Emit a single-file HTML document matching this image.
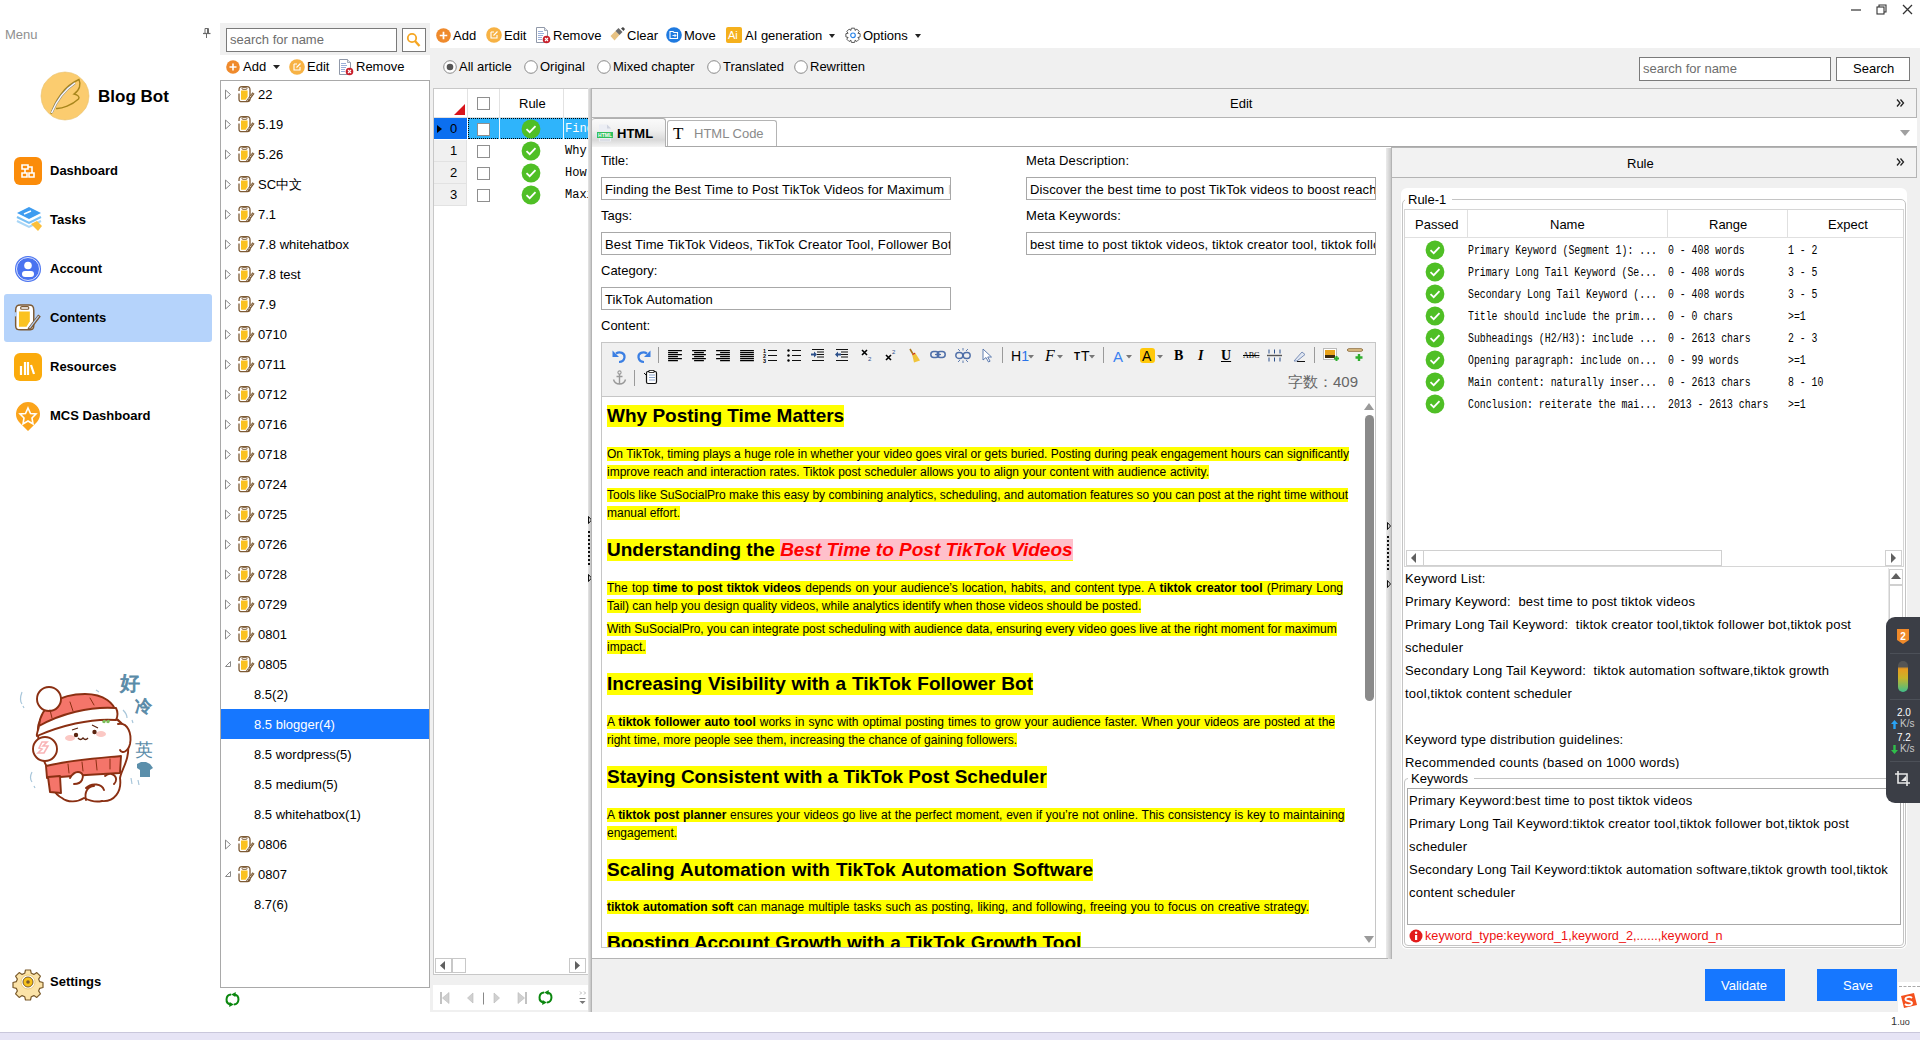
<!DOCTYPE html>
<html><head><meta charset="utf-8">
<style>
*{box-sizing:border-box;margin:0;padding:0}
html,body{width:1920px;height:1040px;overflow:hidden;background:#fff;font-family:"Liberation Sans",sans-serif;font-size:13px;color:#000}
.a{position:absolute}
.t{position:absolute;white-space:nowrap;line-height:1}
svg{position:absolute;overflow:visible}
.gray{background:#f0f0f0}
.inp{position:absolute;background:#fff;border:1px solid #a9a9a9}
.side{font-weight:bold;font-size:13px}
.tree .t{font-size:13px}
</style></head><body>
<!-- ============ SIDEBAR ============ -->
<div class="t" style="left:5px;top:28px;font-size:13px;color:#8f8f8f">Menu</div>
<svg style="left:202px;top:27px" width="10" height="12" viewBox="0 0 10 12"><path d="M3 1.5h3.5v5H3z" fill="none" stroke="#6a6a6a" stroke-width="1"/><path d="M5.5 2v4.5" stroke="#6a6a6a" stroke-width="1"/><path d="M1 6.5h7.5" stroke="#6a6a6a" stroke-width="1.2"/><path d="M4.5 7v4" stroke="#6a6a6a" stroke-width="1"/></svg>
<!-- logo -->
<svg style="left:40px;top:71px" width="50" height="50" viewBox="0 0 50 50">
<polygon points="25,1 31.5,1.9 37,4.2 41.8,8.2 45.8,13 48.1,18.5 49,25 48.1,31.5 45.8,37 41.8,41.8 37,45.8 31.5,48.1 25,49 18.5,48.1 13,45.8 8.2,41.8 4.2,37 1.9,31.5 1,25 1.9,18.5 4.2,13 8.2,8.2 13,4.2 18.5,1.9" fill="#fbcc6f" stroke="#e8bf6a" stroke-width="0.6"/>
<path d="M11 43 C15 30 24 15 39 8.5 C41 13 40 19 34 23 C38 24 40 26 38.5 28 C32 34 22 38 16 37.5" stroke="#a8861c" stroke-width="1.4" fill="none"/>
<path d="M11.5 42 C16 31 23 20 35 12" stroke="#8a8a8a" stroke-width="2.2" fill="none"/>
<path d="M11.5 42 C16 31 23 20 35 12" stroke="#fff" stroke-width="1.3" fill="none"/>
</svg>
<div class="t" style="left:98px;top:88px;font-size:17px;font-weight:bold">Blog Bot</div>

<div class="a" style="left:4px;top:294px;width:208px;height:48px;background:#b5d3fb;border-radius:3px"></div>
<!-- dashboard -->
<div class="a" style="left:14px;top:157px;width:28px;height:28px;background:#fb8c0a;border-radius:6px"></div>
<svg style="left:14px;top:157px" width="28" height="28" viewBox="0 0 28 28"><path d="M8 8h6v4h-6z M8 16h5v4h-5z M15 16h5v4h-5z M11 12v4 M14 10h4v6" stroke="#fff" stroke-width="1.6" fill="none"/></svg>
<div class="t side" style="left:50px;top:164px">Dashboard</div>
<!-- tasks -->
<svg style="left:15px;top:205px" width="30" height="30" viewBox="0 0 30 30">
<path d="M2 16l12 6 12-6" stroke="#a9d6f7" stroke-width="2" fill="none"/>
<path d="M2 12l12 6 12-6" stroke="#79c0f5" stroke-width="2" fill="none"/>
<polygon points="2,8 14,2 26,8 14,14" fill="#3e9cf0"/>
<path d="M9 9l7-3" stroke="#fff" stroke-width="1.5"/>
<polygon points="16,19 22,16 27,21 23,26" fill="#fbbf3a"/>
</svg>
<div class="t side" style="left:50px;top:213px">Tasks</div>
<!-- account -->
<svg style="left:14px;top:255px" width="28" height="28" viewBox="0 0 28 28"><circle cx="14" cy="14" r="13" fill="#4a73f0"/><circle cx="14" cy="14" r="11.5" fill="none" stroke="#fff" stroke-width="0.8"/><circle cx="14" cy="10.5" r="3.8" fill="#fff"/><rect x="8" y="16" width="12" height="6" rx="3" fill="#fff"/></svg>
<div class="t side" style="left:50px;top:262px">Account</div>
<!-- contents -->
<svg style="left:14px;top:304px" width="28" height="28" viewBox="0 0 17 17"><path d="M1 4 C1 1 2 0.6 4 0.6 H9 C11 0.6 12 1 12 4 V13 C12 15.4 11 15.6 9 15.6 H4 C2 15.6 1 15.4 1 13 Z" fill="#fff" stroke="#7d5a34" stroke-width="0.9"/><path d="M1 5v2.5" stroke="#b5d3fb" stroke-width="1.4"/><rect x="4" y="1.6" width="5" height="1.6" rx="0.8" fill="none" stroke="#7d5a34" stroke-width="0.7"/><path d="M3 4.5H9.6V10.5L7.6 13.8H3Z" fill="#fbc21f"/><path d="M9 15.5 L15.5 7" stroke="#7d5a34" stroke-width="2"/><path d="M9.4 14.6 L15 7.4" stroke="#b5d3fb" stroke-width="0.7"/></svg>
<div class="t side" style="left:50px;top:311px">Contents</div>
<!-- resources -->
<div class="a" style="left:14px;top:353px;width:28px;height:28px;background:#fbab0c;border-radius:6px"></div>
<svg style="left:14px;top:353px" width="28" height="28" viewBox="0 0 28 28"><path d="M7 13v9 M11 9v13 M14 9v13 M17 12l3 9" stroke="#fff" stroke-width="2.2" fill="none"/></svg>
<div class="t side" style="left:50px;top:360px">Resources</div>
<!-- mcs -->
<svg style="left:14px;top:402px" width="28" height="30" viewBox="0 0 28 30"><path d="M14 29 L5 20 A12 12 0 1 1 23 20 Z" fill="#fba41b"/><polygon points="14,6 16.5,11.5 22,12 18,16 19,22 14,19 9,22 10,16 6,12 11.5,11.5" fill="none" stroke="#fff" stroke-width="1.6"/></svg>
<div class="t side" style="left:50px;top:409px">MCS Dashboard</div>
<!-- settings -->
<svg style="left:14px;top:968px" width="28" height="28" viewBox="0 0 28 28"><path d="M11.5 2h5l0.8 3.3 2.6 1.1 2.9-1.8 3.6 3.6-1.8 2.9 1.1 2.6 3.3 0.8v5l-3.3 0.8-1.1 2.6 1.8 2.9-3.6 3.6-2.9-1.8-2.6 1.1-0.8 3.3h-5l-0.8-3.3-2.6-1.1-2.9 1.8-3.6-3.6 1.8-2.9-1.1-2.6-3.3-0.8v-5l3.3-0.8 1.1-2.6-1.8-2.9 3.6-3.6 2.9 1.8 2.6-1.1z" fill="#fbe3a8" stroke="#7a5a2a" stroke-width="1.2" stroke-linejoin="round"/><circle cx="14" cy="14" r="7" fill="#fff" stroke="#e8c060" stroke-width="0.8"/><circle cx="14" cy="14" r="5" fill="#f7c21c" stroke="#7a5a2a" stroke-width="1"/><circle cx="14" cy="14" r="1.8" fill="#7a5a2a"/></svg>
<div class="t side" style="left:50px;top:975px">Settings</div>

<!-- STICKER -->
<svg style="left:10px;top:660px" width="160" height="150" viewBox="0 0 160 150">
<g stroke="#8a2f12" stroke-width="1.9" stroke-linejoin="round" stroke-linecap="round">
<!-- body / face -->
<path d="M28 72 C26 52 50 48 75 52 C100 52 118 60 118 82 C120 100 112 108 110 118 C112 132 104 142 92 141 C84 143 78 140 74 138 C68 142 58 143 52 138 C44 134 40 124 40 112 C32 100 28 88 28 72Z" fill="#fff"/>
<!-- right earmuff -->
<path d="M108 64 C118 62 122 74 120 84 C118 92 112 94 110 90" fill="#fff"/>
<!-- hat -->
<path d="M29 66 C30 46 50 34 75 34 C95 34 104 44 106 52 C90 50 60 52 29 66Z" fill="#f4756a"/>
<circle cx="39" cy="39" r="12" fill="#fff"/>
<path d="M29 66 C28 72 26 74 27 76 C50 66 80 58 106 60 C108 56 108 52 106 48 C80 46 50 54 29 66Z" fill="#fff"/>
<path d="M40 50l2 8M60 42l3 9M80 38l4 7" stroke-width="1"/>
<!-- left earmuff -->
<circle cx="35" cy="89" r="12" fill="#fff"/>
<!-- scarf -->
<path d="M36 106 C60 100 90 98 111 96 L110 113 C90 114 60 116 37 118Z" fill="#f4756a"/>
<path d="M38 117 L50 116 L51 133 L40 132Z" fill="#f4756a"/>
<path d="M58 104l1 9M72 102l1 9M86 100l1 10M100 99l0 10" stroke-width="1"/>
<!-- hands -->
<path d="M60 118 C66 108 76 112 72 120 C70 124 66 124 64 124" fill="#fff"/>
<path d="M95 116 C102 110 110 118 104 124" fill="#fff"/>
<path d="M76 128 C82 122 92 124 94 130 M76 140 C74 132 78 126 84 126" fill="none"/>
</g>
<path d="M29 88 l3 -6 l5 0 l-4 4 l5 0 l-4 7 l-6 0 l4 -4z" fill="none" stroke="#f9b4b6" stroke-width="1.6"/>
<ellipse cx="60" cy="78" rx="5" ry="3" fill="#fbc8c4"/>
<ellipse cx="91" cy="74" rx="5" ry="3" fill="#fbc8c4"/>
<circle cx="66" cy="75" r="2.2" fill="#5a2410"/><circle cx="84.5" cy="72" r="2.2" fill="#5a2410"/>
<path d="M68 78 q2.5 3 5 0 q2.5 3 5 0" fill="none" stroke="#5a2410" stroke-width="1.3"/>
<path d="M62 70l6 -2M82 65l6 3" stroke="#5a2410" stroke-width="1.2"/>
<path d="M92 62 q2 -4 4 -1 q-1 4 -4 1z M96 62 q2 -4 4 -1 q-1 4 -4 1z" fill="#7bbf5a"/>
<g fill="#5a8ba8" stroke="#5a8ba8" stroke-width="0.9" font-family="Liberation Sans" font-size="19">
<text x="110" y="30" font-size="20">好</text>
<text x="125" y="52" font-size="17">冷</text>
<text x="125" y="96" font-size="18" stroke-width="0">英</text>
</g>
<path d="M127 104 l4 -2 h5 l4 2 l3 4 -3 2 v7 h-10 v-7 l-3 -2z" fill="#5b8fab"/>
<path d="M12 32 q-3 8 0 12 M13 46 l1 2 M113 50 q4 4 4 8 M122 60l1 3 M22 112 q-3 6 0 10 M24 126 l1 2 M128 120 l1 5 M121 118 l1 6 M86 30l3 2" stroke="#a8c6da" stroke-width="1.2" fill="none"/>
</svg>


<!-- ============ TREE PANEL ============ -->
<div class="a gray" style="left:220px;top:23px;width:210px;height:32px"></div>
<div class="inp" style="left:226px;top:28px;width:171px;height:24px;border-color:#7a7a7a"></div>
<div class="t" style="left:230px;top:33px;font-size:13px;color:#6d6d6d">search for name</div>
<div class="inp" style="left:402px;top:28px;width:24px;height:24px;border-color:#7a7a7a"></div>
<svg style="left:406px;top:32px" width="16" height="16" viewBox="0 0 16 16"><circle cx="6" cy="6" r="4.2" fill="none" stroke="#f5a623" stroke-width="1.8"/><path d="M9 9l4.5 5" stroke="#f5a623" stroke-width="2.4"/></svg>

<svg style="left:226px;top:60px" width="14" height="14" viewBox="0 0 14 14"><circle cx="7" cy="7" r="6.8" fill="#ef8a2c"/><path d="M7 3.5v7M3.5 7h7" stroke="#fff" stroke-width="1.6"/></svg>
<div class="t" style="left:243px;top:60px">Add</div>
<svg style="left:273px;top:65px" width="8" height="4" viewBox="0 0 8 4"><path d="M0 0h7l-3.5 4z" fill="#222"/></svg>
<svg style="left:289px;top:59px" width="16" height="16" viewBox="0 0 16 16"><circle cx="8" cy="8" r="7.8" fill="#f7b244"/><path d="M5 5h3M5 5v6h6V8M7.5 8.5l4-4" stroke="#fff" stroke-width="1.1" fill="none"/></svg>
<div class="t" style="left:307px;top:60px">Edit</div>
<svg style="left:338px;top:59px" width="16" height="17" viewBox="0 0 16 17"><path d="M1.5 0.5h8l3 3v12h-11z" fill="#fff" stroke="#9098a8" stroke-width="1"/><path d="M9.5 0.5v3h3" fill="#e0e4ec" stroke="#9098a8" stroke-width="0.8"/><path d="M3 4.5h5M3 6.5h6M3 8.5h5M3 10.5h4M3 12.5h4" stroke="#6f8cc8" stroke-width="0.7"/><circle cx="11.5" cy="12.5" r="3.8" fill="#c8202c"/><path d="M10 11l3 3M13 11l-3 3" stroke="#fff" stroke-width="1.1"/></svg>
<div class="t" style="left:356px;top:60px">Remove</div>

<div class="a" style="left:220px;top:80px;width:210px;height:908px;border:1px solid #a9a9a9;background:#fff"></div>
<div class="a" style="left:221px;top:709px;width:208px;height:30px;background:#1677ff"></div>
<div class="tree"><svg style="left:224px;top:89px" width="8" height="11" viewBox="0 0 8 11"><path d="M1.5 1v9l5-4.5z" fill="none" stroke="#8a8a8a" stroke-width="1"/></svg>
<svg style="left:238px;top:86px" width="17" height="17" viewBox="0 0 17 17"><path d="M1 4 C1 1 2 0.6 4 0.6 H9 C11 0.6 12 1 12 4 V13 C12 15.4 11 15.6 9 15.6 H4 C2 15.6 1 15.4 1 13 Z" fill="#fff" stroke="#7d5a34" stroke-width="1.3"/><path d="M1 5v2.5" stroke="#fff" stroke-width="2"/><rect x="4" y="1.6" width="5" height="1.8" rx="0.9" fill="none" stroke="#7d5a34" stroke-width="0.9"/><path d="M3 4.5H9.6V10.5L7.6 13.8H3Z" fill="#fbc21f"/><path d="M9 15.5 L15.5 7" stroke="#7d5a34" stroke-width="2.6"/><path d="M9.4 14.6 L15 7.4" stroke="#fff" stroke-width="0.9" stroke-dasharray="1.2 1"/></svg>
<div class="t" style="left:258px;top:88px">22</div>
<svg style="left:224px;top:119px" width="8" height="11" viewBox="0 0 8 11"><path d="M1.5 1v9l5-4.5z" fill="none" stroke="#8a8a8a" stroke-width="1"/></svg>
<svg style="left:238px;top:116px" width="17" height="17" viewBox="0 0 17 17"><path d="M1 4 C1 1 2 0.6 4 0.6 H9 C11 0.6 12 1 12 4 V13 C12 15.4 11 15.6 9 15.6 H4 C2 15.6 1 15.4 1 13 Z" fill="#fff" stroke="#7d5a34" stroke-width="1.3"/><path d="M1 5v2.5" stroke="#fff" stroke-width="2"/><rect x="4" y="1.6" width="5" height="1.8" rx="0.9" fill="none" stroke="#7d5a34" stroke-width="0.9"/><path d="M3 4.5H9.6V10.5L7.6 13.8H3Z" fill="#fbc21f"/><path d="M9 15.5 L15.5 7" stroke="#7d5a34" stroke-width="2.6"/><path d="M9.4 14.6 L15 7.4" stroke="#fff" stroke-width="0.9" stroke-dasharray="1.2 1"/></svg>
<div class="t" style="left:258px;top:118px">5.19</div>
<svg style="left:224px;top:149px" width="8" height="11" viewBox="0 0 8 11"><path d="M1.5 1v9l5-4.5z" fill="none" stroke="#8a8a8a" stroke-width="1"/></svg>
<svg style="left:238px;top:146px" width="17" height="17" viewBox="0 0 17 17"><path d="M1 4 C1 1 2 0.6 4 0.6 H9 C11 0.6 12 1 12 4 V13 C12 15.4 11 15.6 9 15.6 H4 C2 15.6 1 15.4 1 13 Z" fill="#fff" stroke="#7d5a34" stroke-width="1.3"/><path d="M1 5v2.5" stroke="#fff" stroke-width="2"/><rect x="4" y="1.6" width="5" height="1.8" rx="0.9" fill="none" stroke="#7d5a34" stroke-width="0.9"/><path d="M3 4.5H9.6V10.5L7.6 13.8H3Z" fill="#fbc21f"/><path d="M9 15.5 L15.5 7" stroke="#7d5a34" stroke-width="2.6"/><path d="M9.4 14.6 L15 7.4" stroke="#fff" stroke-width="0.9" stroke-dasharray="1.2 1"/></svg>
<div class="t" style="left:258px;top:148px">5.26</div>
<svg style="left:224px;top:179px" width="8" height="11" viewBox="0 0 8 11"><path d="M1.5 1v9l5-4.5z" fill="none" stroke="#8a8a8a" stroke-width="1"/></svg>
<svg style="left:238px;top:176px" width="17" height="17" viewBox="0 0 17 17"><path d="M1 4 C1 1 2 0.6 4 0.6 H9 C11 0.6 12 1 12 4 V13 C12 15.4 11 15.6 9 15.6 H4 C2 15.6 1 15.4 1 13 Z" fill="#fff" stroke="#7d5a34" stroke-width="1.3"/><path d="M1 5v2.5" stroke="#fff" stroke-width="2"/><rect x="4" y="1.6" width="5" height="1.8" rx="0.9" fill="none" stroke="#7d5a34" stroke-width="0.9"/><path d="M3 4.5H9.6V10.5L7.6 13.8H3Z" fill="#fbc21f"/><path d="M9 15.5 L15.5 7" stroke="#7d5a34" stroke-width="2.6"/><path d="M9.4 14.6 L15 7.4" stroke="#fff" stroke-width="0.9" stroke-dasharray="1.2 1"/></svg>
<div class="t" style="left:258px;top:178px">SC中文</div>
<svg style="left:224px;top:209px" width="8" height="11" viewBox="0 0 8 11"><path d="M1.5 1v9l5-4.5z" fill="none" stroke="#8a8a8a" stroke-width="1"/></svg>
<svg style="left:238px;top:206px" width="17" height="17" viewBox="0 0 17 17"><path d="M1 4 C1 1 2 0.6 4 0.6 H9 C11 0.6 12 1 12 4 V13 C12 15.4 11 15.6 9 15.6 H4 C2 15.6 1 15.4 1 13 Z" fill="#fff" stroke="#7d5a34" stroke-width="1.3"/><path d="M1 5v2.5" stroke="#fff" stroke-width="2"/><rect x="4" y="1.6" width="5" height="1.8" rx="0.9" fill="none" stroke="#7d5a34" stroke-width="0.9"/><path d="M3 4.5H9.6V10.5L7.6 13.8H3Z" fill="#fbc21f"/><path d="M9 15.5 L15.5 7" stroke="#7d5a34" stroke-width="2.6"/><path d="M9.4 14.6 L15 7.4" stroke="#fff" stroke-width="0.9" stroke-dasharray="1.2 1"/></svg>
<div class="t" style="left:258px;top:208px">7.1</div>
<svg style="left:224px;top:239px" width="8" height="11" viewBox="0 0 8 11"><path d="M1.5 1v9l5-4.5z" fill="none" stroke="#8a8a8a" stroke-width="1"/></svg>
<svg style="left:238px;top:236px" width="17" height="17" viewBox="0 0 17 17"><path d="M1 4 C1 1 2 0.6 4 0.6 H9 C11 0.6 12 1 12 4 V13 C12 15.4 11 15.6 9 15.6 H4 C2 15.6 1 15.4 1 13 Z" fill="#fff" stroke="#7d5a34" stroke-width="1.3"/><path d="M1 5v2.5" stroke="#fff" stroke-width="2"/><rect x="4" y="1.6" width="5" height="1.8" rx="0.9" fill="none" stroke="#7d5a34" stroke-width="0.9"/><path d="M3 4.5H9.6V10.5L7.6 13.8H3Z" fill="#fbc21f"/><path d="M9 15.5 L15.5 7" stroke="#7d5a34" stroke-width="2.6"/><path d="M9.4 14.6 L15 7.4" stroke="#fff" stroke-width="0.9" stroke-dasharray="1.2 1"/></svg>
<div class="t" style="left:258px;top:238px">7.8 whitehatbox</div>
<svg style="left:224px;top:269px" width="8" height="11" viewBox="0 0 8 11"><path d="M1.5 1v9l5-4.5z" fill="none" stroke="#8a8a8a" stroke-width="1"/></svg>
<svg style="left:238px;top:266px" width="17" height="17" viewBox="0 0 17 17"><path d="M1 4 C1 1 2 0.6 4 0.6 H9 C11 0.6 12 1 12 4 V13 C12 15.4 11 15.6 9 15.6 H4 C2 15.6 1 15.4 1 13 Z" fill="#fff" stroke="#7d5a34" stroke-width="1.3"/><path d="M1 5v2.5" stroke="#fff" stroke-width="2"/><rect x="4" y="1.6" width="5" height="1.8" rx="0.9" fill="none" stroke="#7d5a34" stroke-width="0.9"/><path d="M3 4.5H9.6V10.5L7.6 13.8H3Z" fill="#fbc21f"/><path d="M9 15.5 L15.5 7" stroke="#7d5a34" stroke-width="2.6"/><path d="M9.4 14.6 L15 7.4" stroke="#fff" stroke-width="0.9" stroke-dasharray="1.2 1"/></svg>
<div class="t" style="left:258px;top:268px">7.8 test</div>
<svg style="left:224px;top:299px" width="8" height="11" viewBox="0 0 8 11"><path d="M1.5 1v9l5-4.5z" fill="none" stroke="#8a8a8a" stroke-width="1"/></svg>
<svg style="left:238px;top:296px" width="17" height="17" viewBox="0 0 17 17"><path d="M1 4 C1 1 2 0.6 4 0.6 H9 C11 0.6 12 1 12 4 V13 C12 15.4 11 15.6 9 15.6 H4 C2 15.6 1 15.4 1 13 Z" fill="#fff" stroke="#7d5a34" stroke-width="1.3"/><path d="M1 5v2.5" stroke="#fff" stroke-width="2"/><rect x="4" y="1.6" width="5" height="1.8" rx="0.9" fill="none" stroke="#7d5a34" stroke-width="0.9"/><path d="M3 4.5H9.6V10.5L7.6 13.8H3Z" fill="#fbc21f"/><path d="M9 15.5 L15.5 7" stroke="#7d5a34" stroke-width="2.6"/><path d="M9.4 14.6 L15 7.4" stroke="#fff" stroke-width="0.9" stroke-dasharray="1.2 1"/></svg>
<div class="t" style="left:258px;top:298px">7.9</div>
<svg style="left:224px;top:329px" width="8" height="11" viewBox="0 0 8 11"><path d="M1.5 1v9l5-4.5z" fill="none" stroke="#8a8a8a" stroke-width="1"/></svg>
<svg style="left:238px;top:326px" width="17" height="17" viewBox="0 0 17 17"><path d="M1 4 C1 1 2 0.6 4 0.6 H9 C11 0.6 12 1 12 4 V13 C12 15.4 11 15.6 9 15.6 H4 C2 15.6 1 15.4 1 13 Z" fill="#fff" stroke="#7d5a34" stroke-width="1.3"/><path d="M1 5v2.5" stroke="#fff" stroke-width="2"/><rect x="4" y="1.6" width="5" height="1.8" rx="0.9" fill="none" stroke="#7d5a34" stroke-width="0.9"/><path d="M3 4.5H9.6V10.5L7.6 13.8H3Z" fill="#fbc21f"/><path d="M9 15.5 L15.5 7" stroke="#7d5a34" stroke-width="2.6"/><path d="M9.4 14.6 L15 7.4" stroke="#fff" stroke-width="0.9" stroke-dasharray="1.2 1"/></svg>
<div class="t" style="left:258px;top:328px">0710</div>
<svg style="left:224px;top:359px" width="8" height="11" viewBox="0 0 8 11"><path d="M1.5 1v9l5-4.5z" fill="none" stroke="#8a8a8a" stroke-width="1"/></svg>
<svg style="left:238px;top:356px" width="17" height="17" viewBox="0 0 17 17"><path d="M1 4 C1 1 2 0.6 4 0.6 H9 C11 0.6 12 1 12 4 V13 C12 15.4 11 15.6 9 15.6 H4 C2 15.6 1 15.4 1 13 Z" fill="#fff" stroke="#7d5a34" stroke-width="1.3"/><path d="M1 5v2.5" stroke="#fff" stroke-width="2"/><rect x="4" y="1.6" width="5" height="1.8" rx="0.9" fill="none" stroke="#7d5a34" stroke-width="0.9"/><path d="M3 4.5H9.6V10.5L7.6 13.8H3Z" fill="#fbc21f"/><path d="M9 15.5 L15.5 7" stroke="#7d5a34" stroke-width="2.6"/><path d="M9.4 14.6 L15 7.4" stroke="#fff" stroke-width="0.9" stroke-dasharray="1.2 1"/></svg>
<div class="t" style="left:258px;top:358px">0711</div>
<svg style="left:224px;top:389px" width="8" height="11" viewBox="0 0 8 11"><path d="M1.5 1v9l5-4.5z" fill="none" stroke="#8a8a8a" stroke-width="1"/></svg>
<svg style="left:238px;top:386px" width="17" height="17" viewBox="0 0 17 17"><path d="M1 4 C1 1 2 0.6 4 0.6 H9 C11 0.6 12 1 12 4 V13 C12 15.4 11 15.6 9 15.6 H4 C2 15.6 1 15.4 1 13 Z" fill="#fff" stroke="#7d5a34" stroke-width="1.3"/><path d="M1 5v2.5" stroke="#fff" stroke-width="2"/><rect x="4" y="1.6" width="5" height="1.8" rx="0.9" fill="none" stroke="#7d5a34" stroke-width="0.9"/><path d="M3 4.5H9.6V10.5L7.6 13.8H3Z" fill="#fbc21f"/><path d="M9 15.5 L15.5 7" stroke="#7d5a34" stroke-width="2.6"/><path d="M9.4 14.6 L15 7.4" stroke="#fff" stroke-width="0.9" stroke-dasharray="1.2 1"/></svg>
<div class="t" style="left:258px;top:388px">0712</div>
<svg style="left:224px;top:419px" width="8" height="11" viewBox="0 0 8 11"><path d="M1.5 1v9l5-4.5z" fill="none" stroke="#8a8a8a" stroke-width="1"/></svg>
<svg style="left:238px;top:416px" width="17" height="17" viewBox="0 0 17 17"><path d="M1 4 C1 1 2 0.6 4 0.6 H9 C11 0.6 12 1 12 4 V13 C12 15.4 11 15.6 9 15.6 H4 C2 15.6 1 15.4 1 13 Z" fill="#fff" stroke="#7d5a34" stroke-width="1.3"/><path d="M1 5v2.5" stroke="#fff" stroke-width="2"/><rect x="4" y="1.6" width="5" height="1.8" rx="0.9" fill="none" stroke="#7d5a34" stroke-width="0.9"/><path d="M3 4.5H9.6V10.5L7.6 13.8H3Z" fill="#fbc21f"/><path d="M9 15.5 L15.5 7" stroke="#7d5a34" stroke-width="2.6"/><path d="M9.4 14.6 L15 7.4" stroke="#fff" stroke-width="0.9" stroke-dasharray="1.2 1"/></svg>
<div class="t" style="left:258px;top:418px">0716</div>
<svg style="left:224px;top:449px" width="8" height="11" viewBox="0 0 8 11"><path d="M1.5 1v9l5-4.5z" fill="none" stroke="#8a8a8a" stroke-width="1"/></svg>
<svg style="left:238px;top:446px" width="17" height="17" viewBox="0 0 17 17"><path d="M1 4 C1 1 2 0.6 4 0.6 H9 C11 0.6 12 1 12 4 V13 C12 15.4 11 15.6 9 15.6 H4 C2 15.6 1 15.4 1 13 Z" fill="#fff" stroke="#7d5a34" stroke-width="1.3"/><path d="M1 5v2.5" stroke="#fff" stroke-width="2"/><rect x="4" y="1.6" width="5" height="1.8" rx="0.9" fill="none" stroke="#7d5a34" stroke-width="0.9"/><path d="M3 4.5H9.6V10.5L7.6 13.8H3Z" fill="#fbc21f"/><path d="M9 15.5 L15.5 7" stroke="#7d5a34" stroke-width="2.6"/><path d="M9.4 14.6 L15 7.4" stroke="#fff" stroke-width="0.9" stroke-dasharray="1.2 1"/></svg>
<div class="t" style="left:258px;top:448px">0718</div>
<svg style="left:224px;top:479px" width="8" height="11" viewBox="0 0 8 11"><path d="M1.5 1v9l5-4.5z" fill="none" stroke="#8a8a8a" stroke-width="1"/></svg>
<svg style="left:238px;top:476px" width="17" height="17" viewBox="0 0 17 17"><path d="M1 4 C1 1 2 0.6 4 0.6 H9 C11 0.6 12 1 12 4 V13 C12 15.4 11 15.6 9 15.6 H4 C2 15.6 1 15.4 1 13 Z" fill="#fff" stroke="#7d5a34" stroke-width="1.3"/><path d="M1 5v2.5" stroke="#fff" stroke-width="2"/><rect x="4" y="1.6" width="5" height="1.8" rx="0.9" fill="none" stroke="#7d5a34" stroke-width="0.9"/><path d="M3 4.5H9.6V10.5L7.6 13.8H3Z" fill="#fbc21f"/><path d="M9 15.5 L15.5 7" stroke="#7d5a34" stroke-width="2.6"/><path d="M9.4 14.6 L15 7.4" stroke="#fff" stroke-width="0.9" stroke-dasharray="1.2 1"/></svg>
<div class="t" style="left:258px;top:478px">0724</div>
<svg style="left:224px;top:509px" width="8" height="11" viewBox="0 0 8 11"><path d="M1.5 1v9l5-4.5z" fill="none" stroke="#8a8a8a" stroke-width="1"/></svg>
<svg style="left:238px;top:506px" width="17" height="17" viewBox="0 0 17 17"><path d="M1 4 C1 1 2 0.6 4 0.6 H9 C11 0.6 12 1 12 4 V13 C12 15.4 11 15.6 9 15.6 H4 C2 15.6 1 15.4 1 13 Z" fill="#fff" stroke="#7d5a34" stroke-width="1.3"/><path d="M1 5v2.5" stroke="#fff" stroke-width="2"/><rect x="4" y="1.6" width="5" height="1.8" rx="0.9" fill="none" stroke="#7d5a34" stroke-width="0.9"/><path d="M3 4.5H9.6V10.5L7.6 13.8H3Z" fill="#fbc21f"/><path d="M9 15.5 L15.5 7" stroke="#7d5a34" stroke-width="2.6"/><path d="M9.4 14.6 L15 7.4" stroke="#fff" stroke-width="0.9" stroke-dasharray="1.2 1"/></svg>
<div class="t" style="left:258px;top:508px">0725</div>
<svg style="left:224px;top:539px" width="8" height="11" viewBox="0 0 8 11"><path d="M1.5 1v9l5-4.5z" fill="none" stroke="#8a8a8a" stroke-width="1"/></svg>
<svg style="left:238px;top:536px" width="17" height="17" viewBox="0 0 17 17"><path d="M1 4 C1 1 2 0.6 4 0.6 H9 C11 0.6 12 1 12 4 V13 C12 15.4 11 15.6 9 15.6 H4 C2 15.6 1 15.4 1 13 Z" fill="#fff" stroke="#7d5a34" stroke-width="1.3"/><path d="M1 5v2.5" stroke="#fff" stroke-width="2"/><rect x="4" y="1.6" width="5" height="1.8" rx="0.9" fill="none" stroke="#7d5a34" stroke-width="0.9"/><path d="M3 4.5H9.6V10.5L7.6 13.8H3Z" fill="#fbc21f"/><path d="M9 15.5 L15.5 7" stroke="#7d5a34" stroke-width="2.6"/><path d="M9.4 14.6 L15 7.4" stroke="#fff" stroke-width="0.9" stroke-dasharray="1.2 1"/></svg>
<div class="t" style="left:258px;top:538px">0726</div>
<svg style="left:224px;top:569px" width="8" height="11" viewBox="0 0 8 11"><path d="M1.5 1v9l5-4.5z" fill="none" stroke="#8a8a8a" stroke-width="1"/></svg>
<svg style="left:238px;top:566px" width="17" height="17" viewBox="0 0 17 17"><path d="M1 4 C1 1 2 0.6 4 0.6 H9 C11 0.6 12 1 12 4 V13 C12 15.4 11 15.6 9 15.6 H4 C2 15.6 1 15.4 1 13 Z" fill="#fff" stroke="#7d5a34" stroke-width="1.3"/><path d="M1 5v2.5" stroke="#fff" stroke-width="2"/><rect x="4" y="1.6" width="5" height="1.8" rx="0.9" fill="none" stroke="#7d5a34" stroke-width="0.9"/><path d="M3 4.5H9.6V10.5L7.6 13.8H3Z" fill="#fbc21f"/><path d="M9 15.5 L15.5 7" stroke="#7d5a34" stroke-width="2.6"/><path d="M9.4 14.6 L15 7.4" stroke="#fff" stroke-width="0.9" stroke-dasharray="1.2 1"/></svg>
<div class="t" style="left:258px;top:568px">0728</div>
<svg style="left:224px;top:599px" width="8" height="11" viewBox="0 0 8 11"><path d="M1.5 1v9l5-4.5z" fill="none" stroke="#8a8a8a" stroke-width="1"/></svg>
<svg style="left:238px;top:596px" width="17" height="17" viewBox="0 0 17 17"><path d="M1 4 C1 1 2 0.6 4 0.6 H9 C11 0.6 12 1 12 4 V13 C12 15.4 11 15.6 9 15.6 H4 C2 15.6 1 15.4 1 13 Z" fill="#fff" stroke="#7d5a34" stroke-width="1.3"/><path d="M1 5v2.5" stroke="#fff" stroke-width="2"/><rect x="4" y="1.6" width="5" height="1.8" rx="0.9" fill="none" stroke="#7d5a34" stroke-width="0.9"/><path d="M3 4.5H9.6V10.5L7.6 13.8H3Z" fill="#fbc21f"/><path d="M9 15.5 L15.5 7" stroke="#7d5a34" stroke-width="2.6"/><path d="M9.4 14.6 L15 7.4" stroke="#fff" stroke-width="0.9" stroke-dasharray="1.2 1"/></svg>
<div class="t" style="left:258px;top:598px">0729</div>
<svg style="left:224px;top:629px" width="8" height="11" viewBox="0 0 8 11"><path d="M1.5 1v9l5-4.5z" fill="none" stroke="#8a8a8a" stroke-width="1"/></svg>
<svg style="left:238px;top:626px" width="17" height="17" viewBox="0 0 17 17"><path d="M1 4 C1 1 2 0.6 4 0.6 H9 C11 0.6 12 1 12 4 V13 C12 15.4 11 15.6 9 15.6 H4 C2 15.6 1 15.4 1 13 Z" fill="#fff" stroke="#7d5a34" stroke-width="1.3"/><path d="M1 5v2.5" stroke="#fff" stroke-width="2"/><rect x="4" y="1.6" width="5" height="1.8" rx="0.9" fill="none" stroke="#7d5a34" stroke-width="0.9"/><path d="M3 4.5H9.6V10.5L7.6 13.8H3Z" fill="#fbc21f"/><path d="M9 15.5 L15.5 7" stroke="#7d5a34" stroke-width="2.6"/><path d="M9.4 14.6 L15 7.4" stroke="#fff" stroke-width="0.9" stroke-dasharray="1.2 1"/></svg>
<div class="t" style="left:258px;top:628px">0801</div>
<svg style="left:224px;top:660px" width="8" height="8" viewBox="0 0 8 8"><path d="M6.5 1.5v5h-5z" fill="none" stroke="#8a8a8a" stroke-width="1"/></svg>
<svg style="left:238px;top:656px" width="17" height="17" viewBox="0 0 17 17"><path d="M1 4 C1 1 2 0.6 4 0.6 H9 C11 0.6 12 1 12 4 V13 C12 15.4 11 15.6 9 15.6 H4 C2 15.6 1 15.4 1 13 Z" fill="#fff" stroke="#7d5a34" stroke-width="1.3"/><path d="M1 5v2.5" stroke="#fff" stroke-width="2"/><rect x="4" y="1.6" width="5" height="1.8" rx="0.9" fill="none" stroke="#7d5a34" stroke-width="0.9"/><path d="M3 4.5H9.6V10.5L7.6 13.8H3Z" fill="#fbc21f"/><path d="M9 15.5 L15.5 7" stroke="#7d5a34" stroke-width="2.6"/><path d="M9.4 14.6 L15 7.4" stroke="#fff" stroke-width="0.9" stroke-dasharray="1.2 1"/></svg>
<div class="t" style="left:258px;top:658px">0805</div>
<div class="t" style="left:254px;top:688px;color:#000">8.5(2)</div>
<div class="t" style="left:254px;top:718px;color:#fff">8.5 blogger(4)</div>
<div class="t" style="left:254px;top:748px;color:#000">8.5 wordpress(5)</div>
<div class="t" style="left:254px;top:778px;color:#000">8.5 medium(5)</div>
<div class="t" style="left:254px;top:808px;color:#000">8.5 whitehatbox(1)</div>
<svg style="left:224px;top:839px" width="8" height="11" viewBox="0 0 8 11"><path d="M1.5 1v9l5-4.5z" fill="none" stroke="#8a8a8a" stroke-width="1"/></svg>
<svg style="left:238px;top:836px" width="17" height="17" viewBox="0 0 17 17"><path d="M1 4 C1 1 2 0.6 4 0.6 H9 C11 0.6 12 1 12 4 V13 C12 15.4 11 15.6 9 15.6 H4 C2 15.6 1 15.4 1 13 Z" fill="#fff" stroke="#7d5a34" stroke-width="1.3"/><path d="M1 5v2.5" stroke="#fff" stroke-width="2"/><rect x="4" y="1.6" width="5" height="1.8" rx="0.9" fill="none" stroke="#7d5a34" stroke-width="0.9"/><path d="M3 4.5H9.6V10.5L7.6 13.8H3Z" fill="#fbc21f"/><path d="M9 15.5 L15.5 7" stroke="#7d5a34" stroke-width="2.6"/><path d="M9.4 14.6 L15 7.4" stroke="#fff" stroke-width="0.9" stroke-dasharray="1.2 1"/></svg>
<div class="t" style="left:258px;top:838px">0806</div>
<svg style="left:224px;top:870px" width="8" height="8" viewBox="0 0 8 8"><path d="M6.5 1.5v5h-5z" fill="none" stroke="#8a8a8a" stroke-width="1"/></svg>
<svg style="left:238px;top:866px" width="17" height="17" viewBox="0 0 17 17"><path d="M1 4 C1 1 2 0.6 4 0.6 H9 C11 0.6 12 1 12 4 V13 C12 15.4 11 15.6 9 15.6 H4 C2 15.6 1 15.4 1 13 Z" fill="#fff" stroke="#7d5a34" stroke-width="1.3"/><path d="M1 5v2.5" stroke="#fff" stroke-width="2"/><rect x="4" y="1.6" width="5" height="1.8" rx="0.9" fill="none" stroke="#7d5a34" stroke-width="0.9"/><path d="M3 4.5H9.6V10.5L7.6 13.8H3Z" fill="#fbc21f"/><path d="M9 15.5 L15.5 7" stroke="#7d5a34" stroke-width="2.6"/><path d="M9.4 14.6 L15 7.4" stroke="#fff" stroke-width="0.9" stroke-dasharray="1.2 1"/></svg>
<div class="t" style="left:258px;top:868px">0807</div>
<div class="t" style="left:254px;top:898px;color:#000">8.7(6)</div></div>
<svg style="left:225px;top:992px" width="15" height="15" viewBox="0 0 15 15"><path d="M6.2 2.6 A5 5 0 0 0 5.6 12.5" stroke="#0b870f" stroke-width="2" fill="none"/><path d="M8.8 12.4 A5 5 0 0 0 9.4 2.5" stroke="#0b870f" stroke-width="2" fill="none"/><path d="M4.6 10 L8.8 12.6 L4.2 15z" fill="#0b870f"/><path d="M10.4 5 L6.2 2.4 L10.8 0z" fill="#0b870f"/></svg>

<!-- ============ MAIN ============ -->
<div class="a gray" style="left:430px;top:48px;width:1490px;height:964px"></div>
<svg style="left:436px;top:28px" width="15" height="15" viewBox="0 0 14 14"><circle cx="7" cy="7" r="6.8" fill="#ef8a2c"/><path d="M7 3.5v7M3.5 7h7" stroke="#fff" stroke-width="1.6"/></svg>
<div class="t" style="left:453px;top:29px">Add</div>
<svg style="left:486px;top:27px" width="16" height="16" viewBox="0 0 16 16"><circle cx="8" cy="8" r="7.8" fill="#f7b244"/><path d="M5 5h3M5 5v6h6V8M7.5 8.5l4-4" stroke="#fff" stroke-width="1.1" fill="none"/></svg>
<div class="t" style="left:504px;top:29px">Edit</div>
<svg style="left:535px;top:27px" width="16" height="17" viewBox="0 0 16 17"><path d="M1.5 0.5h8l3 3v12h-11z" fill="#fff" stroke="#9098a8" stroke-width="1"/><path d="M9.5 0.5v3h3" fill="#e0e4ec" stroke="#9098a8" stroke-width="0.8"/><path d="M3 4.5h5M3 6.5h6M3 8.5h5M3 10.5h4M3 12.5h4" stroke="#6f8cc8" stroke-width="0.7"/><circle cx="11.5" cy="12.5" r="3.8" fill="#c8202c"/><path d="M10 11l3 3M13 11l-3 3" stroke="#fff" stroke-width="1.1"/></svg>
<div class="t" style="left:553px;top:29px">Remove</div>
<svg style="left:610px;top:27px" width="16" height="16" viewBox="0 0 16 16"><path d="M0.5 9l5-5 4 4-5 5.5z" fill="#e8c384"/><path d="M5.5 4l3-3 4 4-3 3z" fill="#6a6a6a"/><path d="M11 1.5l2-1.5 2 2-1.5 2z" fill="#444"/></svg>
<div class="t" style="left:627px;top:29px">Clear</div>
<svg style="left:666px;top:27px" width="16" height="16" viewBox="0 0 16 16"><circle cx="8" cy="8" r="7.8" fill="#1f7ae0"/><path d="M4 4.5h3l1 1h3.5v6h-7.5z" fill="none" stroke="#fff" stroke-width="1.1"/><path d="M6.5 8.5h3.5M8.5 7l1.5 1.5-1.5 1.5" stroke="#fff" stroke-width="0.9" fill="none"/></svg>
<div class="t" style="left:684px;top:29px">Move</div>
<div class="a" style="left:726px;top:27px;width:16px;height:16px;background:#f5b01c;border-radius:2px"></div>
<div class="t" style="left:728px;top:30px;font-size:11px;color:#fff">Ai</div>
<div class="t" style="left:745px;top:29px">AI generation</div>
<svg style="left:829px;top:34px" width="7" height="4" viewBox="0 0 7 4"><path d="M0 0h6l-3 4z" fill="#222"/></svg>
<svg style="left:845px;top:27px" width="16" height="17" viewBox="0 0 16 17"><path d="M15.12,6.71 L15.12,9.89 L12.93,10.50 L13.04,10.23 L14.16,12.21 L11.91,14.46 L9.93,13.34 L10.20,13.23 L9.59,15.42 L6.41,15.42 L5.80,13.23 L6.07,13.34 L4.09,14.46 L1.84,12.21 L2.96,10.23 L3.07,10.50 L0.88,9.89 L0.88,6.71 L3.07,6.10 L2.96,6.37 L1.84,4.39 L4.09,2.14 L6.07,3.26 L5.80,3.37 L6.41,1.18 L9.59,1.18 L10.20,3.37 L9.93,3.26 L11.91,2.14 L14.16,4.39 L13.04,6.37 L12.93,6.10Z" fill="none" stroke="#555" stroke-width="1" stroke-linejoin="round"/><circle cx="8" cy="8.3" r="2.3" fill="none" stroke="#2a84e8" stroke-width="1.2"/></svg>
<div class="t" style="left:863px;top:29px">Options</div>
<svg style="left:915px;top:34px" width="7" height="4" viewBox="0 0 7 4"><path d="M0 0h6l-3 4z" fill="#222"/></svg>

<svg style="left:443px;top:60px" width="14" height="14" viewBox="0 0 14 14"><circle cx="7" cy="7" r="6.3" fill="#fff" stroke="#8a8a8a" stroke-width="1"/><circle cx="7" cy="7" r="3.3" fill="#555"/></svg>
<div class="t" style="left:459px;top:60px">All article</div>
<svg style="left:524px;top:60px" width="14" height="14" viewBox="0 0 14 14"><circle cx="7" cy="7" r="6.3" fill="#fff" stroke="#8a8a8a" stroke-width="1"/></svg>
<div class="t" style="left:540px;top:60px">Original</div>
<svg style="left:597px;top:60px" width="14" height="14" viewBox="0 0 14 14"><circle cx="7" cy="7" r="6.3" fill="#fff" stroke="#8a8a8a" stroke-width="1"/></svg>
<div class="t" style="left:613px;top:60px">Mixed chapter</div>
<svg style="left:707px;top:60px" width="14" height="14" viewBox="0 0 14 14"><circle cx="7" cy="7" r="6.3" fill="#fff" stroke="#8a8a8a" stroke-width="1"/></svg>
<div class="t" style="left:723px;top:60px">Translated</div>
<svg style="left:794px;top:60px" width="14" height="14" viewBox="0 0 14 14"><circle cx="7" cy="7" r="6.3" fill="#fff" stroke="#8a8a8a" stroke-width="1"/></svg>
<div class="t" style="left:810px;top:60px">Rewritten</div>
<div class="inp" style="left:1639px;top:57px;width:192px;height:24px;border-color:#7a7a7a"></div>
<div class="t" style="left:1643px;top:62px;color:#6d6d6d">search for name</div>
<div class="inp" style="left:1836px;top:57px;width:74px;height:24px;border-color:#7a7a7a"></div>
<div class="t" style="left:1853px;top:62px">Search</div>

<div class="a" style="left:433px;top:88px;width:156px;height:887px;background:#fff;border:1px solid #c8c8c8"></div>
<div class="a" style="left:434px;top:89px;width:154px;height:29px;background:#fff;border-bottom:1px solid #e0e0e0"></div>
<div class="a" style="left:467px;top:89px;width:1px;height:29px;background:#e2e2e2"></div>
<div class="a" style="left:499px;top:89px;width:1px;height:29px;background:#e2e2e2"></div>
<div class="a" style="left:563px;top:89px;width:1px;height:29px;background:#e2e2e2"></div>
<svg style="left:454px;top:104px" width="12" height="11" viewBox="0 0 12 11"><path d="M0 11L11 0V11z" fill="#d9141b"/></svg>
<div class="a" style="left:477px;top:97px;width:13px;height:13px;border:1px solid #8f8f8f;background:#fff"></div>
<div class="t" style="left:519px;top:97px">Rule</div>
<div class="a" style="left:434px;top:118px;width:33px;height:21px;background:#0b6ff0"></div>
<div class="a" style="left:468px;top:118px;width:120px;height:21px;background:#2fb4fb;border:1px dotted #000;border-right:none"></div>
<div class="a" style="left:499px;top:118px;width:1px;height:21px;background:#e8f6ff"></div>
<div class="a" style="left:563px;top:118px;width:1px;height:21px;background:#e8f6ff"></div>
<svg style="left:437px;top:125px" width="6" height="8" viewBox="0 0 6 8"><path d="M0 0l5 4-5 4z" fill="#000"/></svg>
<div class="t" style="left:450px;top:122px">0</div>
<div class="a" style="left:477px;top:123px;width:13px;height:13px;border:1px solid #8f8f8f;background:#fff"></div>
<svg style="left:521px;top:119px" width="20" height="20" viewBox="0 0 20 20"><circle cx="10" cy="10" r="9.4" fill="#4fbf25"/><path d="M5.5 10.2l3.2 3 5.8-6" stroke="#fff" stroke-width="1.8" fill="none"/></svg>
<div class="a" style="left:564px;top:118px;width:24px;height:22px;overflow:hidden"><div class="t" style="left:1px;top:5px;font-family:'Liberation Mono',monospace;font-size:12px;color:#fff">Find</div></div>
<div class="a" style="left:434px;top:140px;width:33px;height:22px;background:#f0f0f0;border-bottom:1px solid #e2e2e2;border-right:1px solid #e2e2e2"></div>
<div class="t" style="left:450px;top:144px">1</div>
<div class="a" style="left:477px;top:145px;width:13px;height:13px;border:1px solid #8f8f8f;background:#fff"></div>
<svg style="left:521px;top:141px" width="20" height="20" viewBox="0 0 20 20"><circle cx="10" cy="10" r="9.4" fill="#4fbf25"/><path d="M5.5 10.2l3.2 3 5.8-6" stroke="#fff" stroke-width="1.8" fill="none"/></svg>
<div class="a" style="left:564px;top:140px;width:24px;height:22px;overflow:hidden"><div class="t" style="left:1px;top:5px;font-family:'Liberation Mono',monospace;font-size:12px;color:#000">Why</div></div>
<div class="a" style="left:434px;top:162px;width:33px;height:22px;background:#f0f0f0;border-bottom:1px solid #e2e2e2;border-right:1px solid #e2e2e2"></div>
<div class="t" style="left:450px;top:166px">2</div>
<div class="a" style="left:477px;top:167px;width:13px;height:13px;border:1px solid #8f8f8f;background:#fff"></div>
<svg style="left:521px;top:163px" width="20" height="20" viewBox="0 0 20 20"><circle cx="10" cy="10" r="9.4" fill="#4fbf25"/><path d="M5.5 10.2l3.2 3 5.8-6" stroke="#fff" stroke-width="1.8" fill="none"/></svg>
<div class="a" style="left:564px;top:162px;width:24px;height:22px;overflow:hidden"><div class="t" style="left:1px;top:5px;font-family:'Liberation Mono',monospace;font-size:12px;color:#000">How</div></div>
<div class="a" style="left:434px;top:184px;width:33px;height:22px;background:#f0f0f0;border-bottom:1px solid #e2e2e2;border-right:1px solid #e2e2e2"></div>
<div class="t" style="left:450px;top:188px">3</div>
<div class="a" style="left:477px;top:189px;width:13px;height:13px;border:1px solid #8f8f8f;background:#fff"></div>
<svg style="left:521px;top:185px" width="20" height="20" viewBox="0 0 20 20"><circle cx="10" cy="10" r="9.4" fill="#4fbf25"/><path d="M5.5 10.2l3.2 3 5.8-6" stroke="#fff" stroke-width="1.8" fill="none"/></svg>
<div class="a" style="left:564px;top:184px;width:24px;height:22px;overflow:hidden"><div class="t" style="left:1px;top:5px;font-family:'Liberation Mono',monospace;font-size:12px;color:#000">Maxi</div></div>
<div class="a" style="left:435px;top:958px;width:17px;height:15px;border:1px solid #c8c8c8;background:#fff"></div>
<svg style="left:440px;top:961px" width="6" height="9" viewBox="0 0 6 9"><path d="M5 0v9L0 4.5z" fill="#606060"/></svg>
<div class="a" style="left:452px;top:958px;width:14px;height:15px;border:1px solid #c8c8c8;background:#fff"></div>
<div class="a" style="left:569px;top:958px;width:17px;height:15px;border:1px solid #c8c8c8;background:#fff"></div>
<svg style="left:575px;top:961px" width="6" height="9" viewBox="0 0 6 9"><path d="M0 0v9l5-4.5z" fill="#606060"/></svg>
<div class="a" style="left:433px;top:985px;width:155px;height:25px;background:#fff"></div>
<svg style="left:440px;top:991px" width="150" height="14" viewBox="0 0 150 14"><path d="M1 1v12" stroke="#a8a8a8" stroke-width="1.4"/><path d="M9 1.5v11L2.5 7z" fill="#d0d0d0" stroke="#b8b8b8" stroke-width="0.6"/><path d="M33 2v10l-5.5-5z" fill="#d0d0d0" stroke="#b8b8b8" stroke-width="0.6"/><path d="M43.5 1.5v12" stroke="#888" stroke-width="1"/><path d="M54 2v10l5.5-5z" fill="#d0d0d0" stroke="#b8b8b8" stroke-width="0.6"/><path d="M78 1.5v11l6.5-5.5z" fill="#d0d0d0" stroke="#b8b8b8" stroke-width="0.6"/><path d="M86 1v12" stroke="#a8a8a8" stroke-width="1.4"/><g transform="translate(98,-1)"><path d="M6.2 2.6 A5 5 0 0 0 5.6 12.5" stroke="#0b870f" stroke-width="2" fill="none"/><path d="M8.8 12.4 A5 5 0 0 0 9.4 2.5" stroke="#0b870f" stroke-width="2" fill="none"/><path d="M4.6 10 L8.8 12.6 L4.2 15z" fill="#0b870f"/><path d="M10.4 5 L6.2 2.4 L10.8 0z" fill="#0b870f"/></g><path d="M140 0.5l1.5 1.5-1.5 1.5M144 0.5l1.5 1.5-1.5 1.5" stroke="#999" stroke-width="0.7" fill="none"/><path d="M139.5 7.5h6" stroke="#888" stroke-width="1"/><path d="M139.5 10h6l-3 3z" fill="#777"/></svg>
<div class="a" style="left:588px;top:88px;width:3px;height:924px;background:linear-gradient(90deg,#e6e6e6,#c4c4c4)"></div>
<!-- grid splitter handle -->
<svg style="left:588px;top:515px" width="4" height="10" viewBox="0 0 4 10"><path d="M0.5 1.5v7l3-3.5z" fill="none" stroke="#111" stroke-width="1"/></svg>
<div class="a" style="left:588px;top:531px;width:2px;height:35px;background:repeating-linear-gradient(180deg,#111 0,#111 2px,transparent 2px,transparent 4px)"></div>
<svg style="left:588px;top:573px" width="4" height="10" viewBox="0 0 4 10"><path d="M0.5 1.5v7l3-3.5z" fill="none" stroke="#111" stroke-width="1"/></svg>
<div class="a" style="left:591px;top:88px;width:1326px;height:30px;background:#f2f2f2;border:1px solid #b4b4b4"></div>
<div class="t" style="left:1230px;top:97px">Edit</div>
<svg style="left:1896px;top:99px" width="9" height="8" viewBox="0 0 9 8"><path d="M1 0.5l3 3.5-3 3.5M4.5 0.5l3 3.5-3 3.5" stroke="#222" stroke-width="1.3" fill="none"/></svg>
<div class="a" style="left:591px;top:118px;width:1326px;height:894px;background:#fff;border-left:1px solid #b4b4b4"></div>
<div class="a" style="left:666px;top:146px;width:1251px;height:1px;background:#a8a8a8"></div>
<div class="a" style="left:592px;top:118px;width:74px;height:29px;background:linear-gradient(180deg,#fafafa 0%,#f0f0f0 40%,#d9d9d9 75%,#f4f4f4 100%);border-top:1px solid #b0b0b0;border-right:1px solid #b0b0b0;border-radius:3px 3px 0 0"></div>
<svg style="left:596px;top:124px" width="18" height="18" viewBox="0 0 18 18"><path d="M3 0.5h8l4 4v13H3z" fill="#eceef4"/><path d="M11 0.5v4h4" fill="#cfd3de"/><rect x="1" y="8" width="16" height="6" fill="#2fbf5e"/><text x="9" y="13" font-size="5" font-family="Liberation Sans" font-weight="bold" fill="#fff" text-anchor="middle">HTML</text><path d="M4 16h10" stroke="#c8cbd6" stroke-width="1"/></svg>
<div class="t" style="left:617px;top:127px;font-weight:bold">HTML</div>
<div class="a" style="left:667px;top:120px;width:110px;height:26px;background:#fff;border:1px solid #b4b4b4;border-bottom:none;border-radius:3px 3px 0 0"></div>
<div class="t" style="left:673px;top:125px;font-family:'Liberation Serif',serif;font-size:17px">T</div>
<div class="t" style="left:694px;top:127px;color:#8a8a8a">HTML Code</div>
<svg style="left:1900px;top:130px" width="10" height="6" viewBox="0 0 10 6"><path d="M0 0h10L5 6z" fill="#a0a0a0"/></svg>
<div class="t" style="left:601px;top:154px">Title:</div>
<div class="inp" style="left:601px;top:177px;width:350px;height:23px;border-color:#a8a8a8;overflow:hidden"><div class="t" style="left:3px;top:5px;letter-spacing:0.13px">Finding the Best Time to Post TikTok Videos for Maximum <span style="color:#ccc">E</span></div></div>
<div class="t" style="left:601px;top:209px">Tags:</div>
<div class="inp" style="left:601px;top:232px;width:350px;height:23px;border-color:#a8a8a8;overflow:hidden"><div class="t" style="left:3px;top:5px;letter-spacing:0.13px">Best Time TikTok Videos, TikTok Creator Tool, Follower Bot</div></div>
<div class="t" style="left:601px;top:264px">Category:</div>
<div class="inp" style="left:601px;top:287px;width:350px;height:23px;border-color:#a8a8a8;overflow:hidden"><div class="t" style="left:3px;top:5px;letter-spacing:0.13px">TikTok Automation</div></div>
<div class="t" style="left:601px;top:319px">Content:</div>
<div class="t" style="left:1026px;top:154px;letter-spacing:0.12px">Meta Description:</div>
<div class="inp" style="left:1026px;top:177px;width:350px;height:23px;border-color:#a8a8a8;overflow:hidden"><div class="t" style="left:3px;top:5px;letter-spacing:0.13px">Discover the best time to post TikTok videos to boost reach</div></div>
<div class="t" style="left:1026px;top:209px;letter-spacing:0.12px">Meta Keywords:</div>
<div class="inp" style="left:1026px;top:232px;width:350px;height:23px;border-color:#a8a8a8;overflow:hidden"><div class="t" style="left:3px;top:5px;letter-spacing:0.13px">best time to post tiktok videos, tiktok creator tool, tiktok follower</div></div>
<div class="a" style="left:601px;top:342px;width:775px;height:606px;border:1px solid #c6c6c6;background:#fff"></div>
<div class="a" style="left:602px;top:343px;width:773px;height:54px;background:#f0f0f0;border-bottom:1px solid #c6c6c6"></div>
<svg style="left:612px;top:349px" width="14" height="14" viewBox="0 0 14 14"><path d="M4 4.5 C8 2 13 4 12.5 8.5 C12 11.5 9.5 13 7 13" stroke="#3b7fe3" stroke-width="2.2" fill="none"/><path d="M0.5 1.5v6.5h6.5z" fill="#3b7fe3"/></svg>
<svg style="left:637px;top:349px" width="14" height="14" viewBox="0 0 14 14"><path d="M10 4.5 C6 2 1 4 1.5 8.5 C2 11.5 4.5 13 7 13" stroke="#3b7fe3" stroke-width="2.2" fill="none"/><path d="M13.5 1.5v6.5h-6.5z" fill="#3b7fe3"/></svg>
<div class="a" style="left:658px;top:347px;width:1px;height:16px;background:#9a9a9a"></div>
<svg style="left:668px;top:350px" width="15" height="12" viewBox="0 0 15 12"><rect x="0" y="0" width="14" height="1.2" rx="0.5" fill="#000"/><rect x="0" y="2" width="10" height="1.2" rx="0.5" fill="#000"/><rect x="0" y="4" width="14" height="1.2" rx="0.5" fill="#000"/><rect x="0" y="6" width="10" height="1.2" rx="0.5" fill="#000"/><rect x="0" y="8" width="14" height="1.2" rx="0.5" fill="#000"/><rect x="0" y="10" width="10" height="1.2" rx="0.5" fill="#000"/></svg>
<svg style="left:692px;top:350px" width="15" height="12" viewBox="0 0 15 12"><rect x="0" y="0" width="14" height="1.2" rx="0.5" fill="#000"/><rect x="2" y="2" width="10" height="1.2" rx="0.5" fill="#000"/><rect x="0" y="4" width="14" height="1.2" rx="0.5" fill="#000"/><rect x="2" y="6" width="10" height="1.2" rx="0.5" fill="#000"/><rect x="0" y="8" width="14" height="1.2" rx="0.5" fill="#000"/><rect x="2" y="10" width="10" height="1.2" rx="0.5" fill="#000"/></svg>
<svg style="left:716px;top:350px" width="15" height="12" viewBox="0 0 15 12"><rect x="0" y="0" width="14" height="1.2" rx="0.5" fill="#000"/><rect x="4" y="2" width="10" height="1.2" rx="0.5" fill="#000"/><rect x="0" y="4" width="14" height="1.2" rx="0.5" fill="#000"/><rect x="4" y="6" width="10" height="1.2" rx="0.5" fill="#000"/><rect x="0" y="8" width="14" height="1.2" rx="0.5" fill="#000"/><rect x="4" y="10" width="10" height="1.2" rx="0.5" fill="#000"/></svg>
<svg style="left:740px;top:350px" width="15" height="12" viewBox="0 0 15 12"><rect x="0" y="0" width="14" height="1.2" rx="0.5" fill="#000"/><rect x="0" y="2" width="14" height="1.2" rx="0.5" fill="#000"/><rect x="0" y="4" width="14" height="1.2" rx="0.5" fill="#000"/><rect x="0" y="6" width="14" height="1.2" rx="0.5" fill="#000"/><rect x="0" y="8" width="14" height="1.2" rx="0.5" fill="#000"/><rect x="0" y="10" width="14" height="1.2" rx="0.5" fill="#000"/></svg>
<svg style="left:763px;top:348px" width="15" height="15" viewBox="0 0 15 15"><text x="0" y="5" font-size="5.5" font-family="Liberation Sans" font-weight="bold">1</text><text x="0" y="10" font-size="5.5" font-family="Liberation Sans" font-weight="bold">2</text><text x="0" y="15" font-size="5.5" font-family="Liberation Sans" font-weight="bold">3</text><path d="M5 2.5h9M5 7.5h9M5 12.5h9" stroke="#111" stroke-width="1.1"/></svg>
<svg style="left:787px;top:348px" width="15" height="15" viewBox="0 0 15 15"><circle cx="1.5" cy="2.5" r="1.2"/><circle cx="1.5" cy="7.5" r="1.2"/><circle cx="1.5" cy="12.5" r="1.2"/><path d="M5 2.5h9M5 7.5h9M5 12.5h9" stroke="#111" stroke-width="1.1"/></svg>
<svg style="left:811px;top:349px" width="14" height="13" viewBox="0 0 14 13"><path d="M1 0.5h12M6 3h7M6 5.5h7M6 8h7M1 11.5h12" stroke="#111" stroke-width="1.1"/><path d="M0 4.5h3v-2l3 3-3 3v-2h-3z" fill="#2b4f8a"/></svg>
<svg style="left:835px;top:349px" width="14" height="13" viewBox="0 0 14 13"><path d="M1 0.5h12M6 3h7M6 5.5h7M6 8h7M1 11.5h12" stroke="#111" stroke-width="1.1"/><path d="M6 4.5h-3v-2l-3 3 3 3v-2h3z" fill="#2b4f8a"/></svg>
<svg style="left:861px;top:349px" width="12" height="12" viewBox="0 0 12 12"><path d="M1 1l5 5M6 1l-5 5" stroke="#000" stroke-width="1.6"/><text x="7" y="11.5" font-size="6" font-family="Liberation Sans" fill="#2b4f8a">2</text></svg>
<svg style="left:885px;top:349px" width="12" height="12" viewBox="0 0 12 12"><path d="M1 6l5 5M6 6l-5 5" stroke="#000" stroke-width="1.6"/><text x="7" y="5" font-size="6" font-family="Liberation Sans" fill="#2b4f8a">2</text></svg>
<svg style="left:908px;top:348px" width="13" height="15" viewBox="0 0 13 15"><path d="M2 1l3.5 6" stroke="#a8741a" stroke-width="1.6"/><path d="M4 6l3-1.5 5 8-6 2z" fill="#f0c43a"/><path d="M4.5 6.5l2.5-1.2" stroke="#c8202c" stroke-width="1.2"/></svg>
<svg style="left:930px;top:350px" width="16" height="10" viewBox="0 0 16 10"><rect x="0.8" y="1.5" width="8" height="6" rx="3" fill="none" stroke="#4f6fa8" stroke-width="1.5"/><rect x="7.2" y="1.5" width="8" height="6" rx="3" fill="none" stroke="#4f6fa8" stroke-width="1.5"/><path d="M5 4.5h6" stroke="#4f6fa8" stroke-width="1.2"/></svg>
<svg style="left:955px;top:348px" width="16" height="15" viewBox="0 0 16 15"><path d="M3 1l2 2M8 0v2.5M13 1l-2 2M3 14l2-2M8 15v-2.5M13 14l-2-2" stroke="#4f6fa8" stroke-width="0.9"/><rect x="0.8" y="4.5" width="7" height="6" rx="3" fill="none" stroke="#4f6fa8" stroke-width="1.4"/><rect x="8.2" y="4.5" width="7" height="6" rx="3" fill="none" stroke="#4f6fa8" stroke-width="1.4"/></svg>
<svg style="left:982px;top:348px" width="10" height="15" viewBox="0 0 10 15"><path d="M1 1v11l3-2.5 2.5 4.5 1.6-0.8-2.4-4.2h3.8z" fill="#fff" stroke="#4f6fa8" stroke-width="0.9"/></svg>
<div class="a" style="left:1002px;top:347px;width:1px;height:16px;background:#9a9a9a"></div>
<div class="t" style="left:1011px;top:349px;font-size:14px;line-height:14px">H<span style="color:#2a73e8">1</span></div>
<svg style="left:1028px;top:355px" width="7" height="4" viewBox="0 0 7 4"><path d="M0 0h6l-3 3.5z" fill="#777"/></svg>
<div class="t" style="left:1045px;top:348px;font-family:'Liberation Serif',serif;font-style:italic;font-size:16px;line-height:16px">F</div>
<svg style="left:1057px;top:355px" width="7" height="4" viewBox="0 0 7 4"><path d="M0 0h6l-3 3.5z" fill="#777"/></svg>
<div class="t" style="left:1074px;top:352px;font-size:10px;line-height:10px;font-weight:bold">T</div>
<div class="t" style="left:1081px;top:349px;font-size:14px;line-height:14px">T</div>
<svg style="left:1089px;top:355px" width="7" height="4" viewBox="0 0 7 4"><path d="M0 0h6l-3 3.5z" fill="#777"/></svg>
<div class="a" style="left:1103px;top:347px;width:1px;height:16px;background:#9a9a9a"></div>
<div class="t" style="left:1113px;top:349px;font-size:15px;line-height:15px;color:#3a82f0">A</div>
<svg style="left:1126px;top:355px" width="7" height="4" viewBox="0 0 7 4"><path d="M0 0h6l-3 3.5z" fill="#777"/></svg>
<div class="a" style="left:1140px;top:348px;width:15px;height:15px;background:#ffc80a;border-radius:3px"></div>
<div class="t" style="left:1142px;top:349px;font-size:14px;line-height:14px">A</div>
<svg style="left:1157px;top:355px" width="7" height="4" viewBox="0 0 7 4"><path d="M0 0h6l-3 3.5z" fill="#777"/></svg>
<div class="t" style="left:1174px;top:349px;font-family:'Liberation Serif',serif;font-weight:bold;font-size:14px;line-height:14px">B</div>
<div class="t" style="left:1198px;top:349px;font-family:'Liberation Serif',serif;font-weight:bold;font-style:italic;font-size:14px;line-height:14px">I</div>
<div class="t" style="left:1221px;top:349px;font-family:'Liberation Serif',serif;font-weight:bold;font-size:14px;line-height:14px;text-decoration:underline">U</div>
<div class="t" style="left:1243px;top:352px;font-family:'Liberation Serif',serif;font-size:8px;line-height:8px;text-decoration:line-through">ABC</div>
<svg style="left:1267px;top:349px" width="15" height="13" viewBox="0 0 15 13"><path d="M0 6.5h15" stroke="#555" stroke-width="1.4"/><path d="M2 0.5v4M7.5 0.5v4M13 0.5v4M2 8.5v4M7.5 8.5v4M13 8.5v4" stroke="#2b4f8a" stroke-width="1"/></svg>
<svg style="left:1291px;top:349px" width="15" height="13" viewBox="0 0 15 13"><path d="M3 12l8-9 3 2.5-8 6.5z" fill="#dfe6f2" stroke="#6f86b0" stroke-width="0.9"/><path d="M6 12.5h8" stroke="#111" stroke-width="1"/></svg>
<div class="a" style="left:1314px;top:347px;width:1px;height:16px;background:#9a9a9a"></div>
<svg style="left:1323px;top:348px" width="16" height="15" viewBox="0 0 16 15"><rect x="0.5" y="0.5" width="13" height="11" fill="#fff" stroke="#bbb"/><rect x="2" y="2" width="10" height="8" fill="#e8a21a"/><path d="M2 7h10v3H2z" fill="#3b2a10"/><path d="M11 10.5h5M13.5 8v5" stroke="#2fae2f" stroke-width="2"/></svg>
<svg style="left:1347px;top:348px" width="17" height="15" viewBox="0 0 17 15"><rect x="0.5" y="0.8" width="15" height="2.4" rx="1.2" fill="#f3d9a0" stroke="#7a5520" stroke-width="0.9"/><path d="M8.5 9.5h7M12 6v7" stroke="#2fae2f" stroke-width="2.4"/></svg>
<svg style="left:612px;top:370px" width="15" height="15" viewBox="0 0 15 15"><circle cx="7.5" cy="2.5" r="1.6" fill="none" stroke="#999" stroke-width="1.1"/><path d="M7.5 4v9.5M4.5 6.5h6M1.5 9.5 C2.5 13 5.5 14 7.5 14 C9.5 14 12.5 13 13.5 9.5" stroke="#999" stroke-width="1.4" fill="none"/></svg>
<div class="a" style="left:634px;top:370px;width:1px;height:16px;background:#9a9a9a"></div>
<svg style="left:644px;top:370px" width="13" height="14" viewBox="0 0 13 14"><rect x="2.5" y="1.5" width="10" height="12" rx="1.5" fill="#fff" stroke="#111" stroke-width="1.2"/><rect x="5" y="0.5" width="5" height="2" fill="#fff" stroke="#111" stroke-width="0.8"/><path d="M5 5h6M5 7.5h6M5 10h6" stroke="#6f8fc0" stroke-width="0.8"/><path d="M0 3l3 3" stroke="#111" stroke-width="1"/></svg>
<div class="t" style="left:1288px;top:374px;font-size:15px;color:#666">字数：409</div>
<svg style="left:1364px;top:402px" width="10" height="8" viewBox="0 0 10 8"><path d="M0 8h10L5 1z" fill="#9a9a9a"/></svg>
<div class="a" style="left:1365px;top:415px;width:9px;height:286px;background:#8a8a8a;border-radius:5px"></div>
<svg style="left:1364px;top:936px" width="10" height="8" viewBox="0 0 10 8"><path d="M0 0h10L5 7z" fill="#9a9a9a"/></svg>
<div class="t" style="left:607px;top:405px;font-size:19px;font-weight:bold;line-height:22px;height:22px"><span style="background:#ffff00;display:inline-block;">Why Posting Time Matters</span></div>
<div class="t" style="left:607px;top:447px;font-size:12px;line-height:14px"><span style="background:#ffff00;display:inline-block;height:14px;width:742px;text-align:justify;text-align-last:justify;">On TikTok, timing plays a huge role in whether your video goes viral or gets buried. Posting during peak engagement hours can significantly</span></div>
<div class="t" style="left:607px;top:465px;font-size:12px;line-height:14px"><span style="background:#ffff00;display:inline-block;height:14px;width:602px;text-align:justify;text-align-last:justify;">improve reach and interaction rates. Tiktok post scheduler allows you to align your content with audience activity.</span></div>
<div class="t" style="left:607px;top:488px;font-size:12px;line-height:14px"><span style="background:#ffff00;display:inline-block;height:14px;">Tools like SuSocialPro make this easy by combining analytics, scheduling, and automation features so you can post at the right time without</span></div>
<div class="t" style="left:607px;top:506px;font-size:12px;line-height:14px"><span style="background:#ffff00;display:inline-block;height:14px;">manual effort.</span></div>
<div class="t" style="left:607px;top:539px;font-size:19px;font-weight:bold;line-height:22px;height:22px"><span style="background:#ffff00;display:inline-block;">Understanding the <span style="background:#ffc0cb;color:#ff0000;font-style:italic">Best Time to Post TikTok Videos</span></span></div>
<div class="t" style="left:607px;top:581px;font-size:12px;line-height:14px"><span style="background:#ffff00;display:inline-block;height:14px;width:736px;text-align:justify;text-align-last:justify;">The top <b>time to post tiktok videos</b> depends on your audience’s location, habits, and content type. A <b>tiktok creator tool</b> (Primary Long</span></div>
<div class="t" style="left:607px;top:599px;font-size:12px;line-height:14px"><span style="background:#ffff00;display:inline-block;height:14px;">Tail) can help you design quality videos, while analytics identify when those videos should be posted.</span></div>
<div class="t" style="left:607px;top:622px;font-size:12px;line-height:14px"><span style="background:#ffff00;display:inline-block;height:14px;">With SuSocialPro, you can integrate post scheduling with audience data, ensuring every video goes live at the right moment for maximum</span></div>
<div class="t" style="left:607px;top:640px;font-size:12px;line-height:14px"><span style="background:#ffff00;display:inline-block;height:14px;">impact.</span></div>
<div class="t" style="left:607px;top:673px;font-size:19px;font-weight:bold;line-height:22px;height:22px"><span style="background:#ffff00;display:inline-block;width:426px;text-align:justify;text-align-last:justify;">Increasing Visibility with a TikTok Follower Bot</span></div>
<div class="t" style="left:607px;top:715px;font-size:12px;line-height:14px"><span style="background:#ffff00;display:inline-block;height:14px;width:728px;text-align:justify;text-align-last:justify;">A <b>tiktok follower auto tool</b> works in sync with optimal posting times to grow your audience faster. When your videos are posted at the</span></div>
<div class="t" style="left:607px;top:733px;font-size:12px;line-height:14px"><span style="background:#ffff00;display:inline-block;height:14px;width:410px;text-align:justify;text-align-last:justify;">right time, more people see them, increasing the chance of gaining followers.</span></div>
<div class="t" style="left:607px;top:766px;font-size:19px;font-weight:bold;line-height:22px;height:22px"><span style="background:#ffff00;display:inline-block;">Staying Consistent with a TikTok Post Scheduler</span></div>
<div class="t" style="left:607px;top:808px;font-size:12px;line-height:14px"><span style="background:#ffff00;display:inline-block;height:14px;width:737.5px;text-align:justify;text-align-last:justify;">A <b>tiktok post planner</b> ensures your videos go live at the perfect moment, even if you’re not online. This consistency is key to maintaining</span></div>
<div class="t" style="left:607px;top:826px;font-size:12px;line-height:14px"><span style="background:#ffff00;display:inline-block;height:14px;">engagement.</span></div>
<div class="t" style="left:607px;top:859px;font-size:19px;font-weight:bold;line-height:22px;height:22px"><span style="background:#ffff00;display:inline-block;width:486px;text-align:justify;text-align-last:justify;">Scaling Automation with TikTok Automation Software</span></div>
<div class="t" style="left:607px;top:900px;font-size:12px;line-height:14px"><span style="background:#ffff00;display:inline-block;height:14px;width:702px;text-align:justify;text-align-last:justify;"><b>tiktok automation soft</b> can manage multiple tasks such as posting, liking, and following, freeing you to focus on creative strategy.</span></div>
<div class="a" style="left:602px;top:925px;width:760px;height:22px;overflow:hidden">
<div class="t" style="left:5px;top:7px;font-size:19px;font-weight:bold;line-height:22px;height:22px"><span style="background:#ffff00">Boosting Account Growth with a TikTok Growth Tool</span></div>
</div>
<div class="a" style="left:1386px;top:148px;width:5px;height:811px;background:linear-gradient(90deg,#ececec,#c8c8c8)"></div>
<div class="a" style="left:592px;top:958px;width:796px;height:1px;background:#b4b4b4"></div>
<div class="a" style="left:592px;top:959px;width:1325px;height:53px;background:#f0f0f0"></div>
<div class="a" style="left:1391px;top:147px;width:526px;height:31px;background:#f2f2f2;border:1px solid #b4b4b4"></div>
<div class="t" style="left:1627px;top:157px">Rule</div>
<svg style="left:1896px;top:158px" width="9" height="8" viewBox="0 0 9 8"><path d="M1 0.5l3 3.5-3 3.5M4.5 0.5l3 3.5-3 3.5" stroke="#222" stroke-width="1.3" fill="none"/></svg>
<div class="a" style="left:1391px;top:178px;width:526px;height:834px;background:#f0f0f0"></div>
<div class="a" style="left:1391px;top:178px;width:1px;height:781px;background:#b4b4b4"></div>
<div class="a" style="left:1401px;top:188px;width:506px;height:761px;background:#fff;border-radius:6px"></div>
<div class="a" style="left:1402px;top:199px;width:504px;height:749px;border:1px solid #c4c4c4;border-radius:5px"></div>
<div class="a" style="left:1405px;top:192px;width:47px;height:14px;background:#fff"></div>
<div class="t" style="left:1408px;top:193px">Rule-1</div>
<div class="a" style="left:1404px;top:209px;width:500px;height:358px;border:1px solid #d6d6d6;background:#fff"></div>
<div class="a" style="left:1405px;top:210px;width:498px;height:28px;background:#fff;border-bottom:1px solid #e0e0e0"></div>
<div class="a" style="left:1467px;top:210px;width:1px;height:28px;background:#e0e0e0"></div>
<div class="a" style="left:1667px;top:210px;width:1px;height:28px;background:#e0e0e0"></div>
<div class="a" style="left:1787px;top:210px;width:1px;height:28px;background:#e0e0e0"></div>
<div class="t" style="left:1415px;top:218px">Passed</div>
<div class="t" style="left:1550px;top:218px">Name</div>
<div class="t" style="left:1709px;top:218px">Range</div>
<div class="t" style="left:1828px;top:218px">Expect</div>
<svg style="left:1425px;top:240px" width="20" height="20" viewBox="0 0 20 20"><circle cx="10" cy="10" r="9.4" fill="#4fbf25"/><path d="M5.5 10.2l3.2 3 5.8-6" stroke="#fff" stroke-width="1.8" fill="none"/></svg>
<div class="t" style="left:1468px;top:245px;font-family:'Liberation Mono',monospace;font-size:12px;transform-origin:0 0;transform:scaleX(0.82)">Primary Keyword (Segment 1): ...</div>
<div class="t" style="left:1668px;top:245px;font-family:'Liberation Mono',monospace;font-size:12px;transform-origin:0 0;transform:scaleX(0.82)">0 - 408 words</div>
<div class="t" style="left:1788px;top:245px;font-family:'Liberation Mono',monospace;font-size:12px;transform-origin:0 0;transform:scaleX(0.82)">1 - 2</div>
<svg style="left:1425px;top:262px" width="20" height="20" viewBox="0 0 20 20"><circle cx="10" cy="10" r="9.4" fill="#4fbf25"/><path d="M5.5 10.2l3.2 3 5.8-6" stroke="#fff" stroke-width="1.8" fill="none"/></svg>
<div class="t" style="left:1468px;top:267px;font-family:'Liberation Mono',monospace;font-size:12px;transform-origin:0 0;transform:scaleX(0.82)">Primary Long Tail Keyword (Se...</div>
<div class="t" style="left:1668px;top:267px;font-family:'Liberation Mono',monospace;font-size:12px;transform-origin:0 0;transform:scaleX(0.82)">0 - 408 words</div>
<div class="t" style="left:1788px;top:267px;font-family:'Liberation Mono',monospace;font-size:12px;transform-origin:0 0;transform:scaleX(0.82)">3 - 5</div>
<svg style="left:1425px;top:284px" width="20" height="20" viewBox="0 0 20 20"><circle cx="10" cy="10" r="9.4" fill="#4fbf25"/><path d="M5.5 10.2l3.2 3 5.8-6" stroke="#fff" stroke-width="1.8" fill="none"/></svg>
<div class="t" style="left:1468px;top:289px;font-family:'Liberation Mono',monospace;font-size:12px;transform-origin:0 0;transform:scaleX(0.82)">Secondary Long Tail Keyword (...</div>
<div class="t" style="left:1668px;top:289px;font-family:'Liberation Mono',monospace;font-size:12px;transform-origin:0 0;transform:scaleX(0.82)">0 - 408 words</div>
<div class="t" style="left:1788px;top:289px;font-family:'Liberation Mono',monospace;font-size:12px;transform-origin:0 0;transform:scaleX(0.82)">3 - 5</div>
<svg style="left:1425px;top:306px" width="20" height="20" viewBox="0 0 20 20"><circle cx="10" cy="10" r="9.4" fill="#4fbf25"/><path d="M5.5 10.2l3.2 3 5.8-6" stroke="#fff" stroke-width="1.8" fill="none"/></svg>
<div class="t" style="left:1468px;top:311px;font-family:'Liberation Mono',monospace;font-size:12px;transform-origin:0 0;transform:scaleX(0.82)">Title should include the prim...</div>
<div class="t" style="left:1668px;top:311px;font-family:'Liberation Mono',monospace;font-size:12px;transform-origin:0 0;transform:scaleX(0.82)">0 - 0 chars</div>
<div class="t" style="left:1788px;top:311px;font-family:'Liberation Mono',monospace;font-size:12px;transform-origin:0 0;transform:scaleX(0.82)">>=1</div>
<svg style="left:1425px;top:328px" width="20" height="20" viewBox="0 0 20 20"><circle cx="10" cy="10" r="9.4" fill="#4fbf25"/><path d="M5.5 10.2l3.2 3 5.8-6" stroke="#fff" stroke-width="1.8" fill="none"/></svg>
<div class="t" style="left:1468px;top:333px;font-family:'Liberation Mono',monospace;font-size:12px;transform-origin:0 0;transform:scaleX(0.82)">Subheadings (H2/H3): include ...</div>
<div class="t" style="left:1668px;top:333px;font-family:'Liberation Mono',monospace;font-size:12px;transform-origin:0 0;transform:scaleX(0.82)">0 - 2613 chars</div>
<div class="t" style="left:1788px;top:333px;font-family:'Liberation Mono',monospace;font-size:12px;transform-origin:0 0;transform:scaleX(0.82)">2 - 3</div>
<svg style="left:1425px;top:350px" width="20" height="20" viewBox="0 0 20 20"><circle cx="10" cy="10" r="9.4" fill="#4fbf25"/><path d="M5.5 10.2l3.2 3 5.8-6" stroke="#fff" stroke-width="1.8" fill="none"/></svg>
<div class="t" style="left:1468px;top:355px;font-family:'Liberation Mono',monospace;font-size:12px;transform-origin:0 0;transform:scaleX(0.82)">Opening paragraph: include on...</div>
<div class="t" style="left:1668px;top:355px;font-family:'Liberation Mono',monospace;font-size:12px;transform-origin:0 0;transform:scaleX(0.82)">0 - 99 words</div>
<div class="t" style="left:1788px;top:355px;font-family:'Liberation Mono',monospace;font-size:12px;transform-origin:0 0;transform:scaleX(0.82)">>=1</div>
<svg style="left:1425px;top:372px" width="20" height="20" viewBox="0 0 20 20"><circle cx="10" cy="10" r="9.4" fill="#4fbf25"/><path d="M5.5 10.2l3.2 3 5.8-6" stroke="#fff" stroke-width="1.8" fill="none"/></svg>
<div class="t" style="left:1468px;top:377px;font-family:'Liberation Mono',monospace;font-size:12px;transform-origin:0 0;transform:scaleX(0.82)">Main content: naturally inser...</div>
<div class="t" style="left:1668px;top:377px;font-family:'Liberation Mono',monospace;font-size:12px;transform-origin:0 0;transform:scaleX(0.82)">0 - 2613 chars</div>
<div class="t" style="left:1788px;top:377px;font-family:'Liberation Mono',monospace;font-size:12px;transform-origin:0 0;transform:scaleX(0.82)">8 - 10</div>
<svg style="left:1425px;top:394px" width="20" height="20" viewBox="0 0 20 20"><circle cx="10" cy="10" r="9.4" fill="#4fbf25"/><path d="M5.5 10.2l3.2 3 5.8-6" stroke="#fff" stroke-width="1.8" fill="none"/></svg>
<div class="t" style="left:1468px;top:399px;font-family:'Liberation Mono',monospace;font-size:12px;transform-origin:0 0;transform:scaleX(0.82)">Conclusion: reiterate the mai...</div>
<div class="t" style="left:1668px;top:399px;font-family:'Liberation Mono',monospace;font-size:12px;transform-origin:0 0;transform:scaleX(0.82)">2013 - 2613 chars</div>
<div class="t" style="left:1788px;top:399px;font-family:'Liberation Mono',monospace;font-size:12px;transform-origin:0 0;transform:scaleX(0.82)">>=1</div>
<div class="a" style="left:1405px;top:550px;width:498px;height:16px;background:#fff"></div>
<div class="a" style="left:1406px;top:550px;width:18px;height:16px;border:1px solid #d0d0d0"></div>
<svg style="left:1411px;top:553px" width="6" height="10" viewBox="0 0 6 10"><path d="M5 0v10L0 5z" fill="#606060"/></svg>
<div class="a" style="left:1423px;top:550px;width:299px;height:16px;border:1px solid #d0d0d0"></div>
<div class="a" style="left:1885px;top:550px;width:17px;height:16px;border:1px solid #d0d0d0"></div>
<svg style="left:1891px;top:553px" width="6" height="10" viewBox="0 0 6 10"><path d="M0 0v10l5-5z" fill="#606060"/></svg>
<div class="a" style="left:1404px;top:567px;width:500px;height:202px;overflow:hidden">
<div class="t" style="left:1px;top:5px;letter-spacing:0.2px">Keyword List:</div>
<div class="t" style="left:1px;top:28px;letter-spacing:0.2px">Primary Keyword:&nbsp; best time to post tiktok videos</div>
<div class="t" style="left:1px;top:51px;letter-spacing:0.2px">Primary Long Tail Keyword:&nbsp; tiktok creator tool,tiktok follower bot,tiktok post</div>
<div class="t" style="left:1px;top:74px;letter-spacing:0.2px">scheduler</div>
<div class="t" style="left:1px;top:97px;letter-spacing:0.2px">Secondary Long Tail Keyword:&nbsp; tiktok automation software,tiktok growth</div>
<div class="t" style="left:1px;top:120px;letter-spacing:0.2px">tool,tiktok content scheduler</div>
<div class="t" style="left:1px;top:166px;letter-spacing:0.2px">Keyword type distribution guidelines:</div>
<div class="t" style="left:1px;top:189px;letter-spacing:0.2px">Recommended counts (based on 1000 words)</div>
</div>
<div class="a" style="left:1888px;top:568px;width:15px;height:201px;background:#fff;border-left:1px solid #e6e6e6"></div>
<div class="a" style="left:1889px;top:569px;width:14px;height:16px;border:1px solid #d0d0d0"></div>
<svg style="left:1891px;top:573px" width="10" height="6" viewBox="0 0 10 6"><path d="M0 6h10L5 0z" fill="#606060"/></svg>
<div class="a" style="left:1889px;top:585px;width:14px;height:184px;border:1px solid #d0d0d0"></div>
<div class="a" style="left:1404px;top:778px;width:500px;height:168px;border:1px solid #c4c4c4;border-radius:4px"></div>
<div class="a" style="left:1408px;top:771px;width:66px;height:14px;background:#fff"></div>
<div class="t" style="left:1411px;top:772px">Keywords</div>
<div class="a" style="left:1407px;top:788px;width:494px;height:137px;border:1px solid #a8a8a8;background:#fff"></div>
<div class="t" style="left:1409px;top:794px;letter-spacing:0.22px">Primary Keyword:best time to post tiktok videos</div>
<div class="t" style="left:1409px;top:817px;letter-spacing:0.22px">Primary Long Tail Keyword:tiktok creator tool,tiktok follower bot,tiktok post</div>
<div class="t" style="left:1409px;top:840px;letter-spacing:0.22px">scheduler</div>
<div class="t" style="left:1409px;top:863px;letter-spacing:0.22px">Secondary Long Tail Keyword:tiktok automation software,tiktok growth tool,tiktok</div>
<div class="t" style="left:1409px;top:886px;letter-spacing:0.22px">content scheduler</div>
<svg style="left:1409px;top:929px" width="14" height="14" viewBox="0 0 14 14"><circle cx="7" cy="7" r="6.5" fill="#e21b1b"/><rect x="6" y="6" width="2.2" height="5" fill="#fff"/><circle cx="7.1" cy="3.8" r="1.2" fill="#fff"/></svg>
<div class="t" style="left:1425px;top:930px;color:#ee1111;font-size:12.7px">keyword_type:keyword_1,keyword_2,......,keyword_n</div>
<div class="a" style="left:1705px;top:969px;width:80px;height:32px;background:#1677ff"></div>
<div class="t" style="left:1721px;top:979px;color:#fff">Validate</div>
<div class="a" style="left:1817px;top:969px;width:80px;height:32px;background:#1677ff"></div>
<div class="t" style="left:1843px;top:979px;color:#fff">Save</div>
<!-- splitter handle -->
<svg style="left:1387px;top:521px" width="4" height="10" viewBox="0 0 4 10"><path d="M0.5 1.5v7l3-3.5z" fill="none" stroke="#111" stroke-width="1"/></svg>
<div class="a" style="left:1387px;top:536px;width:2px;height:34px;background:repeating-linear-gradient(180deg,#111 0,#111 2px,transparent 2px,transparent 4px)"></div>
<svg style="left:1387px;top:579px" width="4" height="10" viewBox="0 0 4 10"><path d="M0.5 1.5v7l3-3.5z" fill="none" stroke="#111" stroke-width="1"/></svg>

<!-- floating widget -->
<div class="a" style="left:1886px;top:617px;width:34px;height:186px;background:#3b3e46;border-radius:9px 0 0 9px"></div>
<svg style="left:1896px;top:629px" width="14" height="16" viewBox="0 0 14 16"><path d="M1 0h12v11l-6 4-6-4z" fill="#f08a2a"/><text x="7" y="11" font-size="10" font-weight="bold" font-family="Liberation Sans" fill="#fff" text-anchor="middle">2</text></svg>
<div class="a" style="left:1890px;top:653px;width:30px;height:1px;background:#4c5058"></div>
<div class="a" style="left:1898px;top:661px;width:10px;height:31px;border-radius:5px;background:linear-gradient(180deg,#555 0%,#555 18%,#e99a1f 25%,#c9b42a 55%,#3fbf8a 100%)"></div>
<div class="a" style="left:1890px;top:699px;width:30px;height:1px;background:#4c5058"></div>
<div class="t" style="left:1897px;top:708px;font-size:10px;color:#fff">2.0</div>
<svg style="left:1891px;top:720px" width="7" height="9" viewBox="0 0 7 9"><path d="M3.5 0l3.5 4h-2.3v5h-2.4v-5h-2.3z" fill="#29a3f5"/></svg>
<div class="t" style="left:1900px;top:719px;font-size:10px;color:#c8c8c8">K/s</div>
<div class="t" style="left:1897px;top:733px;font-size:10px;color:#fff">7.2</div>
<svg style="left:1891px;top:745px" width="7" height="9" viewBox="0 0 7 9"><path d="M3.5 9l3.5-4h-2.3v-5h-2.4v5h-2.3z" fill="#2fbf4a"/></svg>
<div class="t" style="left:1900px;top:744px;font-size:10px;color:#c8c8c8">K/s</div>
<div class="a" style="left:1890px;top:761px;width:30px;height:1px;background:#4c5058"></div>
<svg style="left:1894px;top:770px" width="18" height="18" viewBox="0 0 18 18"><path d="M4 1v12h12M1 4h12v12" fill="none" stroke="#e8e8e8" stroke-width="1.6"/><path d="M7 11l5-5v5z" fill="#e8e8e8"/></svg>
<!-- bottom right bits -->
<div class="a" style="left:1898px;top:982px;width:22px;height:31px;background:#fff"></div>
<div class="a" style="left:1899px;top:986px;width:21px;height:0;border-top:1px dashed #aaa"></div>
<svg style="left:1900px;top:993px" width="18" height="17" viewBox="0 0 18 17"><path d="M1 3l13-3 3 12-13 3z" fill="#f4511e"/><path d="M12 5 C10 3 5 4 5.5 6.5 C6 9 12 7.5 12 10 C12 12.5 7 13 5 11" stroke="#fff" stroke-width="1.8" fill="none"/></svg>
<div class="t" style="left:1891px;top:1016px;font-size:11px;color:#333">1<span style="font-size:9px">.uo</span></div>

<!-- window controls -->
<svg style="left:1849px;top:3px" width="70" height="14" viewBox="0 0 70 14">
<path d="M2 7h10" stroke="#333" stroke-width="1.2"/>
<rect x="28" y="4" width="7" height="7" fill="none" stroke="#333" stroke-width="1.1"/><path d="M30 4v-2h7v7h-2" fill="none" stroke="#333" stroke-width="1.1"/>
<path d="M54 2l9 9M63 2l-9 9" stroke="#333" stroke-width="1.3"/>
</svg>

<!-- taskbar strip -->
<div class="a" style="left:0;top:1032px;width:1920px;height:8px;background:#e6e4f5;border-top:1px solid #c9c7db"></div>
</body></html>
